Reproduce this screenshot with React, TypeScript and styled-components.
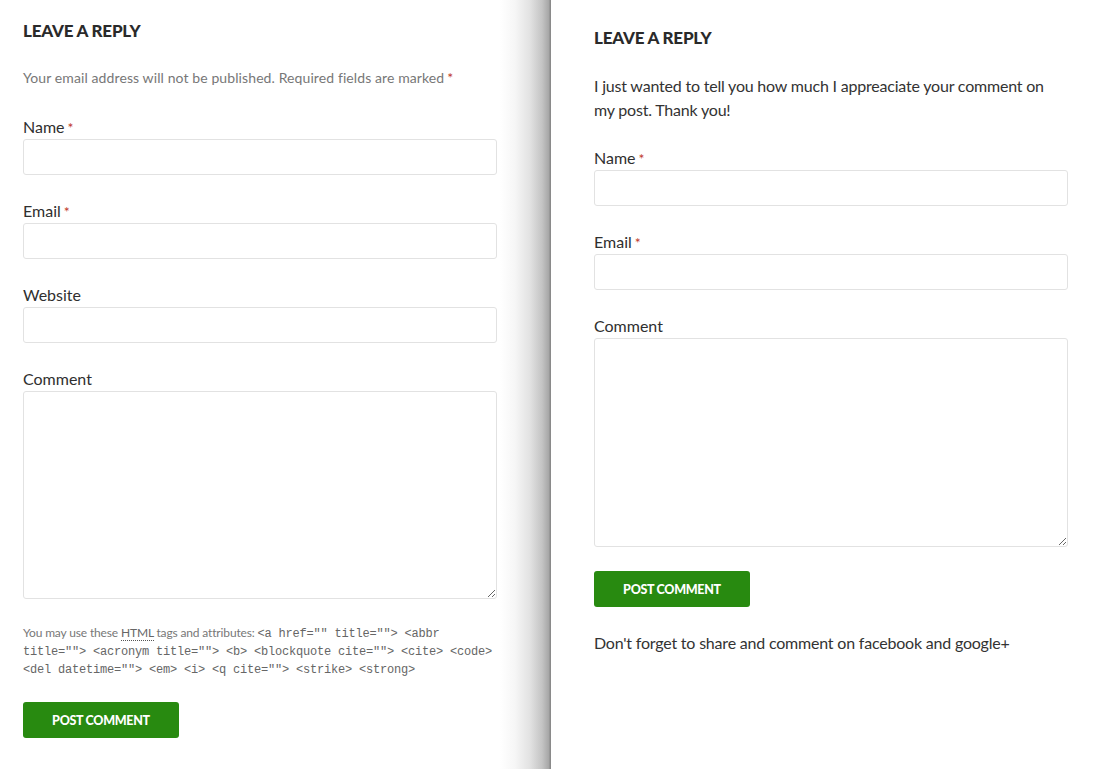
import React from "react";
import styled, { createGlobalStyle } from "styled-components";

const Global = createGlobalStyle`
  html, body { margin: 0; padding: 0; background: #fff; }
  body { font-family: Lato, "Open Sans", sans-serif; color: #333; }
  * { box-sizing: border-box; }
`;

const Page = styled.div`
  display: flex;
  height: 769px;
  overflow: hidden;
`;

const LeftPanel = styled.div`
  width: 551px;
  flex: none;
  padding: 19px 0 0 23px;
  background: linear-gradient(
    to right,
    #fff 0,
    #fff 500px,
    #f6f6f6 515px,
    #e2e2e2 530px,
    #c4c4c4 542px,
    #a6a6a6 549px,
    #8a8a8a 550px,
    #8a8a8a 551px
  );
`;

const RightPanel = styled.div`
  flex: 1;
  padding: 26px 0 0 43px;
  background: #fff;
`;

const Form = styled.div`
  width: 474px;
  display: flex;
  flex-direction: column;
`;

const Heading = styled.h3`
  margin: 0;
  font-family: Lato, sans-serif;
  font-weight: 900;
  font-size: 17px;
  line-height: 24px;
  color: #2a2a2a;
  letter-spacing: -0.2px;
  text-transform: uppercase;
`;

const Note = styled.p`
  margin: 23px 0 0;
  font-size: 14px;
  line-height: 24px;
  color: #777;
  letter-spacing: 0.1px;
`;

const Message = styled.p`
  margin: 24px 0 0;
  font-size: 16px;
  line-height: 24px;
  color: #333;
  letter-spacing: -0.2px;
`;

const Req = styled.span`
  color: #c0392b;
  font-size: 14px;
  line-height: 1;
  margin-left: 3px;
`;

const Field = styled.div<{ $gap: number }>`
  margin-top: ${(p) => p.$gap}px;
  display: flex;
  flex-direction: column;
`;

const Label = styled.label`
  display: block;
  height: 24px;
  font-size: 16px;
  line-height: 24px;
  color: #2f2f2f;
`;

const Input = styled.input`
  width: 474px;
  height: 36px;
  border: 1px solid #e2e2e2;
  border-radius: 3px;
  background: #fff;
  padding: 0 8px;
  font-family: Lato, sans-serif;
  outline: none;
`;

const TextArea = styled.textarea<{ $h: number }>`
  width: 474px;
  height: ${(p) => p.$h}px;
  border: 1px solid #e2e2e2;
  border-radius: 3px;
  background: #fff;
  padding: 8px;
  font-family: Lato, sans-serif;
  resize: vertical;
  outline: none;
  display: block;
`;

const Tags = styled.p`
  margin: 25px 0 0;
  font-size: 12px;
  line-height: 18px;
  color: #777;
  letter-spacing: -0.15px;
`;

const Abbr = styled.abbr`
  text-decoration: none;
  border-bottom: 1px dotted #555;
  color: #666;
`;

const Code = styled.code`
  font-family: "Liberation Mono", "Courier New", monospace;
  font-size: 12px;
  line-height: 12px;
  letter-spacing: -0.2px;
  color: #666;
`;

const Button = styled.button`
  margin-top: 24px;
  width: 156px;
  height: 36px;
  border: none;
  border-radius: 3px;
  background: #288a10;
  color: #fff;
  font-family: Lato, sans-serif;
  font-weight: 900;
  font-size: 12.5px;
  letter-spacing: -0.3px;
  text-transform: uppercase;
  cursor: pointer;
  padding: 0;
`;

const Footer = styled.p`
  margin: 24px 0 0;
  font-size: 16px;
  line-height: 24px;
  color: #333;
  letter-spacing: -0.2px;
`;

export default function App() {
  return (
    <>
      <Global />
      <Page>
        <LeftPanel>
          <Form>
            <Heading>Leave a Reply</Heading>
            <Note>
              Your email address will not be published. Required fields are marked
              <Req>*</Req>
            </Note>
            <Field $gap={25}>
              <Label>
                Name<Req>*</Req>
              </Label>
              <Input />
            </Field>
            <Field $gap={24}>
              <Label>
                Email<Req>*</Req>
              </Label>
              <Input />
            </Field>
            <Field $gap={24}>
              <Label>Website</Label>
              <Input />
            </Field>
            <Field $gap={24}>
              <Label>Comment</Label>
              <TextArea $h={208} />
            </Field>
            <Tags>
              You may use these <Abbr title="HyperText Markup Language">HTML</Abbr> tags and
              attributes:{" "}
              <Code>
                &lt;a href="" title=""&gt; &lt;abbr title=""&gt; &lt;acronym title=""&gt; &lt;b&gt;
                &lt;blockquote cite=""&gt; &lt;cite&gt; &lt;code&gt; &lt;del datetime=""&gt;
                &lt;em&gt; &lt;i&gt; &lt;q cite=""&gt; &lt;strike&gt; &lt;strong&gt;
              </Code>
            </Tags>
            <Button>Post Comment</Button>
          </Form>
        </LeftPanel>
        <RightPanel>
          <Form>
            <Heading>Leave a Reply</Heading>
            <Message>
              I just wanted to tell you how much I appreaciate your comment on my post. Thank you!
            </Message>
            <Field $gap={24}>
              <Label>
                Name<Req>*</Req>
              </Label>
              <Input />
            </Field>
            <Field $gap={24}>
              <Label>
                Email<Req>*</Req>
              </Label>
              <Input />
            </Field>
            <Field $gap={24}>
              <Label>Comment</Label>
              <TextArea $h={209} />
            </Field>
            <Button>Post Comment</Button>
            <Footer>Don't forget to share and comment on facebook and google+</Footer>
          </Form>
        </RightPanel>
      </Page>
    </>
  );
}
